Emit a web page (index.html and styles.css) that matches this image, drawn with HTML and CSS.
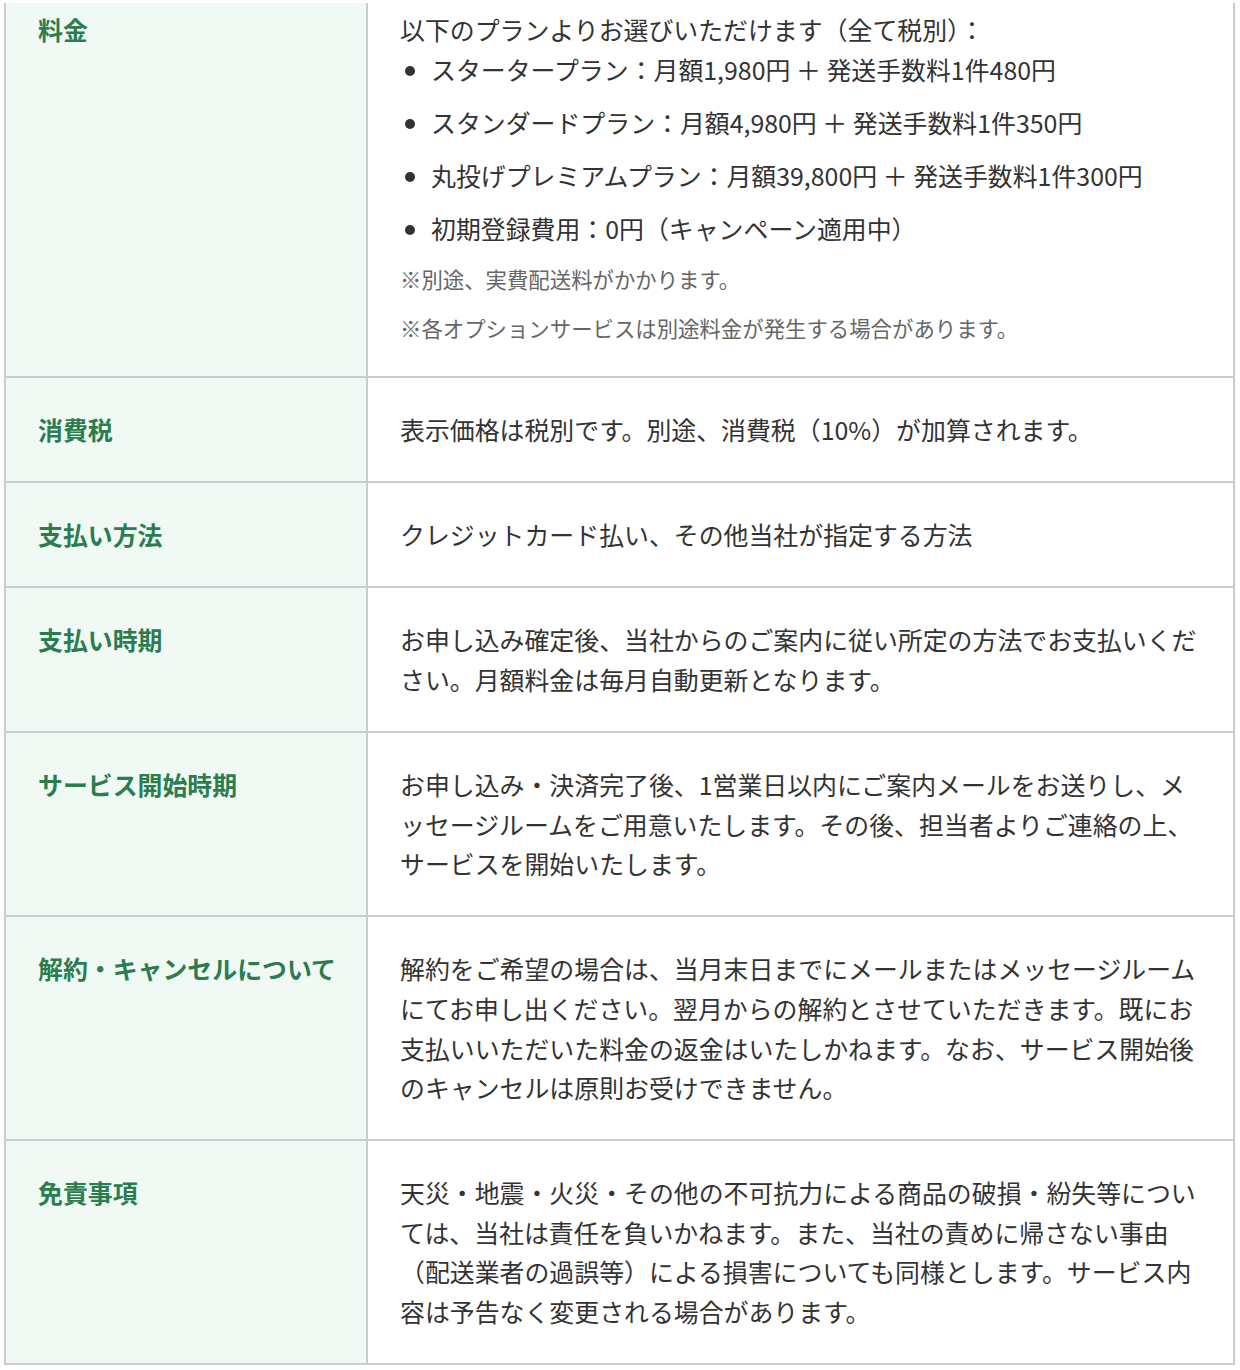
FILE: index.html
```html
<!DOCTYPE html>
<html lang="ja">
<head>
<meta charset="utf-8">
<title>料金・お支払い</title>
<link rel="stylesheet" href="styles.css">
</head>
<body>
<div class="wrap">
<table class="spec">
  <colgroup><col class="col-label"><col></colgroup>
  <tbody>
    <tr class="first">
      <th>料金</th>
      <td>
        以下のプランよりお選びいただけます（全て税別）：
        <ul class="plans">
          <li>スタータープラン：月額1,980円 ＋ 発送手数料1件480円</li>
          <li>スタンダードプラン：月額4,980円 ＋ 発送手数料1件350円</li>
          <li>丸投げプレミアムプラン：月額39,800円 ＋ 発送手数料1件300円</li>
          <li>初期登録費用：0円（キャンペーン適用中）</li>
        </ul>
        <p class="note">※別途、実費配送料がかかります。</p>
        <p class="note">※各オプションサービスは別途料金が発生する場合があります。</p>
      </td>
    </tr>
    <tr>
      <th>消費税</th>
      <td>表示価格は税別です。別途、消費税（10%）が加算されます。</td>
    </tr>
    <tr>
      <th>支払い方法</th>
      <td>クレジットカード払い、その他当社が指定する方法</td>
    </tr>
    <tr>
      <th>支払い時期</th>
      <td>お申し込み確定後、当社からのご案内に従い所定の方法でお支払いください。月額料金は毎月自動更新となります。</td>
    </tr>
    <tr>
      <th>サービス開始時期</th>
      <td>お申し込み・決済完了後、1営業日以内にご案内メールをお送りし、メッセージルームをご用意いたします。その後、担当者よりご連絡の上、サービスを開始いたします。</td>
    </tr>
    <tr>
      <th>解約・キャンセルについて</th>
      <td>解約をご希望の場合は、当月末日までにメールまたはメッセージルームにてお申し出ください。翌月からの解約とさせていただきます。既にお支払いいただいた料金の返金はいたしかねます。なお、サービス開始後のキャンセルは原則お受けできません。</td>
    </tr>
    <tr>
      <th>免責事項</th>
      <td>天災・地震・火災・その他の不可抗力による商品の破損・紛失等については、当社は責任を負いかねます。また、当社の責めに帰さない事由（配送業者の過誤等）による損害についても同様とします。サービス内容は予告なく変更される場合があります。</td>
    </tr>
  </tbody>
</table>
</div>
</body>
</html>
```
FILE: styles.css
```css
html, body {
  margin: 0;
  padding: 0;
  background: #ffffff;
}

body {
  font-family: "Noto Sans CJK JP", "Noto Sans", sans-serif;
  color: #333333;
  font-size: 24.9px;
  line-height: 39.6px;
  letter-spacing: 0;
}

.wrap {
  padding: 3px 5px 0 4px;
}

.spec {
  width: 100%;
  border-collapse: collapse;
  table-layout: fixed;
}

.col-label {
  width: 362px;
}

.spec th,
.spec td {
  border: 2px solid #cccccc;
  padding: 32px 32px 31.5px;
  vertical-align: top;
  text-align: left;
}

.spec th {
  padding-right: 20px;
  white-space: nowrap;
}

.spec tr.first th,
.spec tr.first td {
  border-top: 0;
  padding-top: 7px;
}

.spec th {
  background: #f0f9f4;
  color: #2b7d4f;
  font-weight: 700;
}

.spec td {
  background: #ffffff;
}

.plans {
  margin: 0;
  padding-left: 31px;
  list-style: disc;
}

.plans li {
  margin-bottom: 13.4px;
}

.plans li:last-child {
  margin-bottom: 12.6px;
}

.note {
  margin: 0;
  font-size: 21.4px;
  line-height: 35px;
  color: #666666;
}

.note + .note {
  margin-top: 14px;
}
```
